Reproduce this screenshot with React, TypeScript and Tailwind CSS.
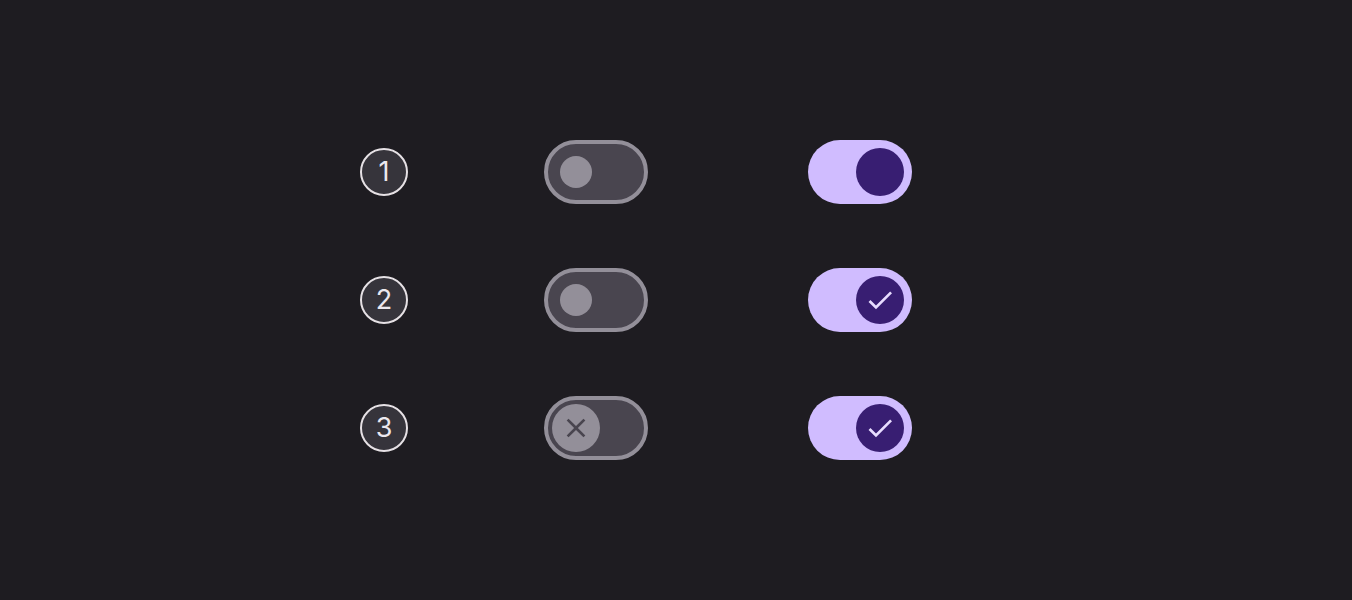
import React from 'react'

function Check() {
  return (
    <svg viewBox="0 0 24 24" className="h-8 w-8" fill="#e8ddff">
      <path d="M9 16.17L4.83 12l-1.42 1.41L9 19 21 7l-1.41-1.41z" />
    </svg>
  )
}

function Close() {
  return (
    <svg viewBox="0 0 24 24" className="h-8 w-8" fill="#49454f">
      <path d="M19 6.41L17.59 5 12 10.59 6.41 5 5 6.41 10.59 12 5 17.59 6.41 19 12 13.41 17.59 19 19 17.59 13.41 12z" />
    </svg>
  )
}

function OffSwitch({ icon }: { icon?: boolean }) {
  return (
    <div className="flex h-16 w-[104px] items-center rounded-full border-4 border-[#938f99] bg-[#49454f]">
      {icon ? (
        <div className="ml-1 flex h-12 w-12 items-center justify-center rounded-full bg-[#938f99]">
          <Close />
        </div>
      ) : (
        <div className="ml-3 h-8 w-8 rounded-full bg-[#938f99]" />
      )}
    </div>
  )
}

function OnSwitch({ icon }: { icon?: boolean }) {
  return (
    <div className="flex h-16 w-[104px] items-center justify-end rounded-full bg-[#d0bcff] pr-2">
      <div className="flex h-12 w-12 items-center justify-center rounded-full bg-[#381e72]">
        {icon && <Check />}
      </div>
    </div>
  )
}

function Badge({ n }: { n: number }) {
  return (
    <div
      className="flex h-12 w-12 items-center justify-center rounded-full border-2 border-[#e6e1e5] bg-[#36343b] pb-px text-[27px] leading-none text-[#ece8ee]"
      style={{ fontFamily: 'Inter, Roboto, sans-serif' }}
    >
      {n}
    </div>
  )
}

const rows = [
  { n: 1, offIcon: false, onIcon: false },
  { n: 2, offIcon: false, onIcon: true },
  { n: 3, offIcon: true, onIcon: true },
]

export default function App() {
  return (
    <div
      className="h-[600px] w-full bg-[#1e1c21] pl-[360px] pt-[140px]"
      style={{ fontFamily: 'Roboto, "Noto Sans", sans-serif' }}
    >
      <div className="flex flex-col gap-16">
        {rows.map((r) => (
          <div key={r.n} className="flex h-16 items-center">
            <Badge n={r.n} />
            <div className="ml-[136px]">
              <OffSwitch icon={r.offIcon} />
            </div>
            <div className="ml-[160px]">
              <OnSwitch icon={r.onIcon} />
            </div>
          </div>
        ))}
      </div>
    </div>
  )
}
